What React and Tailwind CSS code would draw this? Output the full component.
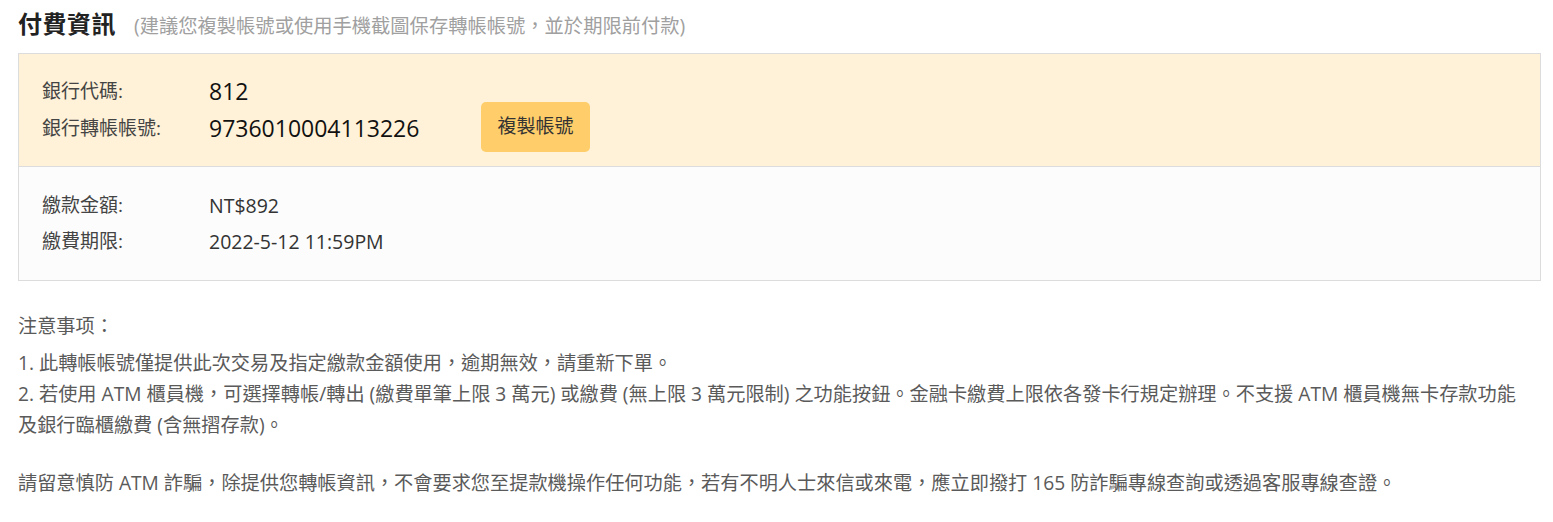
export default function App() {
  const font = { fontFamily: '"Open Sans", "Noto Sans CJK TC", sans-serif' }
  return (
    <div className="min-h-screen bg-white" style={font}>
      <div className="w-[1523px] ml-[18px] pt-[6px]">
        {/* header */}
        <div className="flex items-baseline h-[36px]">
          <h2 className="text-[24px] font-bold text-[#222] tracking-[0.5px]">付費資訊</h2>
          <span className="ml-[18px] text-[19.3px] text-[#a0a0a0]">
            (建議您複製帳號或使用手機截圖保存轉帳帳號，並於期限前付款)
          </span>
        </div>

        {/* payment box */}
        <div className="mt-[11px] border border-[#dcdcdc]">
          <div className="bg-[#fff2d8] h-[113px] border-b border-[#dcdcdc] pl-[23px] flex items-center">
            <div className="flex flex-col gap-[5px]">
              <div className="flex items-center h-[32px]">
                <span className="w-[167px] text-[19px] text-[#444]">銀行代碼:</span>
                <span className="text-[23px] font-medium text-[#111]">812</span>
              </div>
              <div className="flex items-center h-[32px]">
                <span className="w-[167px] text-[19px] text-[#444]">銀行轉帳帳號:</span>
                <span className="w-[272px] text-[23px] font-medium text-[#111]">9736010004113226</span>
                <button className="w-[109px] h-[50px] -mt-[4px] rounded-[5px] bg-[#ffcd69] text-[19px] text-[#333]">
                  複製帳號
                </button>
              </div>
            </div>
          </div>
          <div className="bg-[#fcfcfc] h-[113px] pl-[23px] flex flex-col justify-center gap-[4px]">
            <div className="flex items-center h-[32px]">
              <span className="w-[167px] text-[19px] text-[#444]">繳款金額:</span>
              <span className="text-[19.5px] text-[#333]">NT$892</span>
            </div>
            <div className="flex items-center h-[32px]">
              <span className="w-[167px] text-[19px] text-[#444]">繳費期限:</span>
              <span className="text-[19.5px] text-[#333]">2022-5-12 11:59PM</span>
            </div>
          </div>
        </div>

        {/* notes */}
        <div className="mt-[29px] text-[19.2px] text-[#5a5a5a] leading-[31px]">
          <p>注意事项：</p>
          <p className="mt-[6px]">1. 此轉帳帳號僅提供此次交易及指定繳款金額使用，逾期無效，請重新下單。</p>
          <p>
            2. 若使用 ATM 櫃員機，可選擇轉帳/轉出 (繳費單筆上限 3 萬元) 或繳費 (無上限 3 萬元限制) 之功能按鈕。金融卡繳費上限依各發卡行規定辦理。不支援 ATM 櫃員機無卡存款功能
            <br />
            及銀行臨櫃繳費 (含無摺存款)。
          </p>
          <p className="mt-[27px]">
            請留意慎防 ATM 詐騙，除提供您轉帳資訊，不會要求您至提款機操作任何功能，若有不明人士來信或來電，應立即撥打 165 防詐騙專線查詢或透過客服專線查證。
          </p>
        </div>
      </div>
    </div>
  )
}
